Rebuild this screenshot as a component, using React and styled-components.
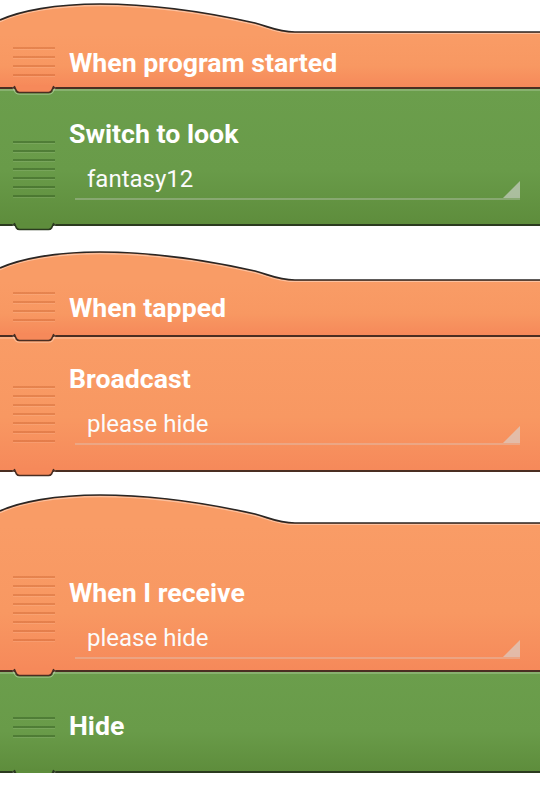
import React from 'react';
import styled, { createGlobalStyle } from 'styled-components';

// colours of the two brick kinds
const palette = {
  orange: {
    top: '#F99C66',
    mid: '#F89862',
    bottom: '#F6895A',
    edge: '#4A2E22',
    line: 'rgba(170, 60, 10, 0.24)',
  },
  green: {
    top: '#6B9E4C',
    mid: '#699B49',
    bottom: '#5E8D3C',
    edge: '#2B3A1F',
    line: 'rgba(20, 55, 10, 0.3)',
  },
};

const scripts = [
  {
    gap: 2,
    bricks: [
      { kind: 'orange', hat: true, height: 55, title: 'When program started', titleTop: 16, handleTop: 13, lines: 4 },
      { kind: 'green', height: 137, title: 'Switch to look', value: 'fantasy12', titleTop: 32, handleTop: 52, lines: 7 },
    ],
  },
  {
    gap: 24,
    bricks: [
      { kind: 'orange', hat: true, height: 55, title: 'When tapped', titleTop: 13, handleTop: 10, lines: 4 },
      { kind: 'orange', height: 135, title: 'Broadcast', value: 'please hide', titleTop: 29, handleTop: 49, lines: 7 },
    ],
  },
  {
    gap: 21,
    bricks: [
      { kind: 'orange', hat: true, height: 147, title: 'When I receive', value: 'please hide', titleTop: 55, handleTop: 51, lines: 8 },
      { kind: 'green', height: 101, title: 'Hide', titleTop: 41, handleTop: 45, lines: 3 },
    ],
  },
];

const GlobalStyle = createGlobalStyle`
  html, body {
    margin: 0;
    padding: 0;
    background: #ffffff;
  }
  body {
    font-family: Roboto, "Noto Sans", "Liberation Sans", sans-serif;
  }
`;

const Page = styled.div`
  display: flex;
  flex-direction: column;
  width: 540px;
  overflow: hidden;
`;

const Script = styled.div`
  display: flex;
  flex-direction: column;
  margin-top: ${props => props.gap}px;
`;

const CapSvg = styled.svg`
  display: block;
  width: 540px;
  height: 32px;
`;

const Brick = styled.div`
  position: relative;
  display: flex;
  box-sizing: border-box;
  height: ${props => props.height}px;
  background: linear-gradient(
    to bottom,
    ${props => palette[props.kind].top} 0%,
    ${props => palette[props.kind].mid} 60%,
    ${props => palette[props.kind].bottom} 100%
  );
  border-bottom: 2px solid ${props => palette[props.kind].edge};
  box-shadow: ${props => (props.hat ? 'none' : 'inset 0 2px 0 rgba(255, 255, 255, 0.2)')};
`;

const Handle = styled.div`
  flex: none;
  align-self: flex-start;
  width: 42px;
  height: ${props => (props.lines - 1) * 9 + 3}px;
  margin: ${props => props.top}px 0 0 13px;
  background: repeating-linear-gradient(
    to bottom,
    ${props => palette[props.kind].line} 0px,
    ${props => palette[props.kind].line} 2px,
    rgba(255, 255, 255, 0.1) 2px,
    rgba(255, 255, 255, 0.1) 3px,
    transparent 3px,
    transparent 9px
  );
`;

const Content = styled.div`
  flex: 1;
  display: flex;
  flex-direction: column;
  margin-left: 14px;
  padding-top: ${props => props.top}px;
`;

const Title = styled.div`
  font-size: 26.7px;
  line-height: 26px;
  font-weight: 700;
  color: #ffffff;
  white-space: nowrap;
`;

const Spinner = styled.div`
  display: flex;
  align-items: flex-end;
  margin: 18px 20px 0 6px;
  border-bottom: 2px solid rgba(215, 215, 215, 0.32);
`;

const Value = styled.div`
  flex: 1;
  padding: 0 0 5px 12px;
  font-size: 24px;
  line-height: 28px;
  font-weight: 400;
  color: #fbfbfb;
`;

const ArrowSvg = styled.svg`
  display: block;
  flex: none;
  width: 17px;
  height: 17px;
`;

const NotchSvg = styled.svg`
  position: absolute;
  z-index: 2;
  left: 14px;
  bottom: -7px;
  width: 40px;
  height: 9px;
  overflow: visible;
`;

const CURVE = 'M0,18 C20,9 55,2 100,2 C160,2 215,12 255,21 C270,25 278,30 295,30 L540,30';

function HatCap({ color }) {
  return (
    <CapSvg viewBox="0 0 540 32" preserveAspectRatio="none">
      <path d={`${CURVE} L540,32 L0,32 Z`} fill={color} />
      <path d={CURVE} transform="translate(0 1.6)" fill="none" stroke="rgba(255,255,255,0.38)" strokeWidth="1.2" />
      <path d={CURVE} fill="none" stroke="#2a2624" strokeWidth="1.6" />
    </CapSvg>
  );
}

function Notch({ kind }) {
  const c = palette[kind];
  return (
    <NotchSvg viewBox="0 0 40 9">
      <path d="M0,0 L2.5,6 Q3.5,7.5 5.5,7.5 L34.5,7.5 Q36.5,7.5 37.5,6 L40,0 Z" fill={c.bottom} />
      <path
        d="M-1.2,2.6 L1.2,7.6 Q2.6,9.2 5.5,9.2 L34.5,9.2 Q37.4,9.2 38.8,7.6 L41.2,2.6"
        fill="none"
        stroke="rgba(255,255,255,0.35)"
        strokeWidth="1"
      />
      <path
        d="M0.2,1 L2.5,6 Q3.5,7.5 5.5,7.5 L34.5,7.5 Q36.5,7.5 37.5,6 L39.8,1"
        fill="none"
        stroke={c.edge}
        strokeWidth="1.6"
      />
    </NotchSvg>
  );
}

function Arrow() {
  return (
    <ArrowSvg viewBox="0 0 17 17">
      <polygon points="17,0 17,17 0,17" fill="rgba(215,215,215,0.62)" />
    </ArrowSvg>
  );
}

function BrickView({ brick }) {
  return (
    <>
      {brick.hat && <HatCap color={palette[brick.kind].top} />}
      <Brick kind={brick.kind} hat={brick.hat} height={brick.height}>
        <Handle kind={brick.kind} lines={brick.lines} top={brick.handleTop} />
        <Content top={brick.titleTop}>
          <Title>{brick.title}</Title>
          {brick.value && (
            <Spinner>
              <Value>{brick.value}</Value>
              <Arrow />
            </Spinner>
          )}
        </Content>
        <Notch kind={brick.kind} />
      </Brick>
    </>
  );
}

export default function App() {
  return (
    <>
      <GlobalStyle />
      <Page>
        {scripts.map((script, i) => (
          <Script key={i} gap={script.gap}>
            {script.bricks.map((brick, j) => (
              <BrickView key={j} brick={brick} />
            ))}
          </Script>
        ))}
      </Page>
    </>
  );
}
